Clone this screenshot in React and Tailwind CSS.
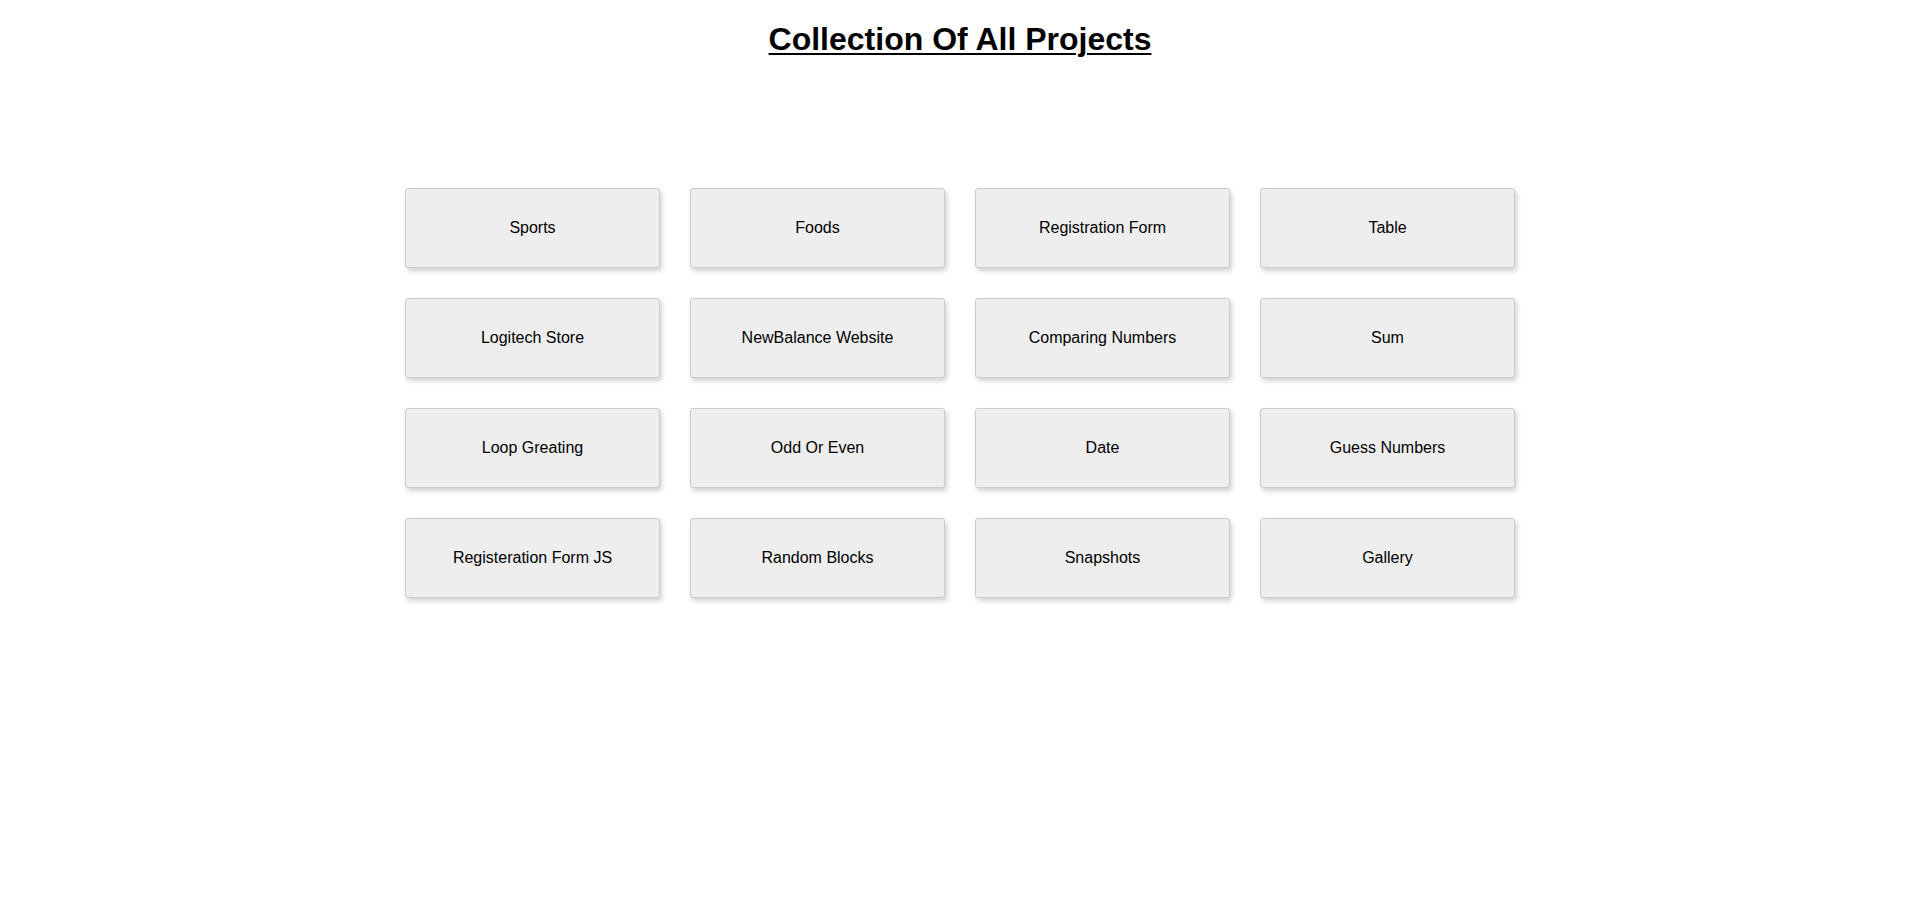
import React from 'react';

const projects = [
  'Sports', 'Foods', 'Registration Form', 'Table',
  'Logitech Store', 'NewBalance Website', 'Comparing Numbers', 'Sum',
  'Loop Greating', 'Odd Or Even', 'Date', 'Guess Numbers',
  'Registeration Form JS', 'Random Blocks', 'Snapshots', 'Gallery',
];

const App = () => {
  return (
    <div className="min-h-screen bg-white text-black" style={{ fontFamily: '"Liberation Sans", Arial, sans-serif' }}>
      <h1 className="text-[32px] font-bold text-center underline leading-[37px] pt-[21px] underline-offset-[3px] decoration-[2px]">
        Collection Of All Projects
      </h1>
      <div className="w-[1110px] mx-auto mt-[130px] grid grid-cols-4 gap-[30px]">
        {projects.map(p => (
          <a
            key={p}
            href="#"
            className="h-[80px] flex items-center justify-center bg-[#eeeeee] border border-[#cccccc] rounded-[3px] shadow-[2px_3px_5px_rgba(0,0,0,0.18)] text-[16px] text-black"
          >
            {p}
          </a>
        ))}
      </div>
    </div>
  );
};

export default App;
